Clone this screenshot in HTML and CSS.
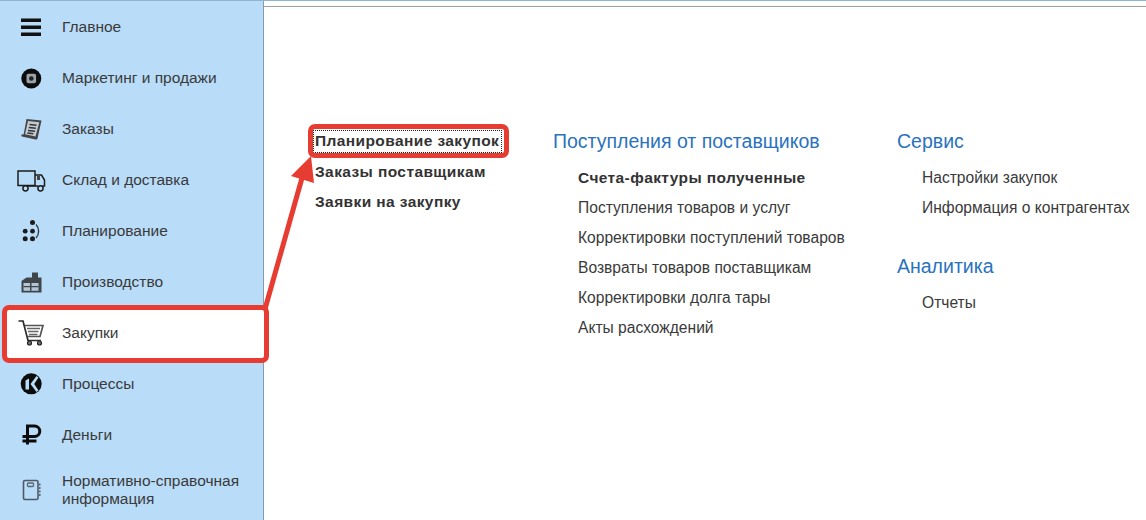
FILE: index.html
```html
<!DOCTYPE html>
<html lang="ru">
<head>
<meta charset="utf-8">
<title>Закупки</title>
<link rel="stylesheet" href="styles.css">
</head>
<body>
<div class="app">
  <nav class="sidebar">
    <div class="nav-item"><span class="nav-icon"><svg width="30" height="30" viewBox="0 0 30 30"><path d="M5 6.500h20v3.500H5zM5 13.500h20v3.500H5zM5 20.500h20v3.500H5z" fill="#111"/></svg></span><span class="nav-label">Главное</span></div>
    <div class="nav-item"><span class="nav-icon"><svg width="30" height="30" viewBox="0 0 30 30"><circle cx="15.300" cy="15.500" r="10" fill="#0c0c0c"/><rect x="10.500" y="10.700" width="9.600" height="9.600" rx="1.800" fill="#9aa2aa"/><circle cx="15.300" cy="15.500" r="2.300" fill="#222"/></svg></span><span class="nav-label">Маркетинг и продажи</span></div>
    <div class="nav-item"><span class="nav-icon"><svg width="30" height="30" viewBox="0 0 30 30"><path d="M10.500 5l15 1.500-4 18c-.3 1-1 1.200-2 1L6 22.500c-.8-.3-.8-1-.3-2l2-.2z" fill="#444"/><path d="M12 7l11.300 1.200L19.500 22.500 9 20.200z" fill="#c3cbd2"/><path d="M13.500 10.500l7 .8M12.800 13.500l7 .8M12 16.500l7 .8M11.300 19l6 .8" stroke="#333" stroke-width="1.400"/></svg></span><span class="nav-label">Заказы</span></div>
    <div class="nav-item"><span class="nav-icon"><svg width="30" height="30" viewBox="0 0 30 30"><path d="M2 6h17v14.500H2z" fill="none" stroke="#1c1c1c" stroke-width="1.500"/><path d="M19 10h6.500l3 5v6h-2" fill="none" stroke="#1c1c1c" stroke-width="1.500"/><path d="M7 21h15" stroke="#1c1c1c" stroke-width="1.500"/><path d="M21 11h3v4h-3z" fill="#444"/><circle cx="9.500" cy="23.300" r="2.600" fill="#b9dcf9" stroke="#1c1c1c" stroke-width="1.500"/><circle cx="24.500" cy="23.300" r="2.600" fill="#b9dcf9" stroke="#1c1c1c" stroke-width="1.500"/></svg></span><span class="nav-label">Склад и доставка</span></div>
    <div class="nav-item"><span class="nav-icon"><svg width="30" height="30" viewBox="0 0 30 30"><g fill="#1c1c1c"><circle cx="16.500" cy="6.500" r="2.500"/><circle cx="9.200" cy="15.200" r="2.400"/><circle cx="16.500" cy="15.200" r="2.400"/><circle cx="9.200" cy="22.800" r="2.500"/><circle cx="16.500" cy="22.800" r="2.500"/></g><path d="M20 8.500c3.500 3.500 3.500 10 0 13.500" fill="none" stroke="#333" stroke-width="1.300"/></svg></span><span class="nav-label">Планирование</span></div>
    <div class="nav-item"><span class="nav-icon"><svg width="30" height="30" viewBox="0 0 30 30"><path d="M5.500 25.500V14l5-3.500h5.500V5.500h6v5h3.500v15z" fill="#3f4549"/><path d="M7.500 16h15v7.800h-15z" fill="#b3c6d6"/><path d="M14 16h1.500v7.800H14zM7.500 19h15v1.200h-15z" fill="#3f4549"/></svg></span><span class="nav-label">Производство</span></div>
    <div class="nav-item nav-item-active"><span class="nav-icon"><svg width="30" height="30" viewBox="0 0 30 30"><path d="M2.500 3h4.500l5 19.500h13" fill="none" stroke="#2a2a2a" stroke-width="1.700"/><path d="M9 7.500h18l-3 11H12" fill="none" stroke="#555" stroke-width="1.700"/><path d="M11 10.500h13M12 13.500h10.500M13 16.500h8.500" stroke="#666" stroke-width="1.400"/><circle cx="13.500" cy="25" r="2" fill="#777" stroke="#222" stroke-width="1.200"/><circle cx="23.500" cy="25" r="2" fill="#777" stroke="#222" stroke-width="1.200"/></svg></span><span class="nav-label">Закупки</span></div>
    <div class="nav-item"><span class="nav-icon"><svg width="30" height="30" viewBox="0 0 30 30"><circle cx="15.200" cy="14.800" r="10.500" fill="#0c0c0c"/><path d="M9.500 11.500l3.500-2v11h-3.500zM14.500 15l6-8 2 1.500-4.300 6.500 4.300 6.500-2 1.500z" fill="#b9dcf9"/></svg></span><span class="nav-label">Процессы</span></div>
    <div class="nav-item"><span class="nav-icon"><svg width="30" height="30" viewBox="0 0 30 30"><path d="M11.500 24.500V6h7a5.200 5.200 0 0 1 0 10.500H6.500M6.500 21h14" fill="none" stroke="#0c0c0c" stroke-width="3"/></svg></span><span class="nav-label">Деньги</span></div>
    <div class="nav-item nav-item-wide"><span class="nav-icon"><svg width="30" height="30" viewBox="0 0 30 30"><rect x="7.500" y="5.500" width="14.500" height="19" rx="1.500" fill="#b9dcf9" stroke="#4f5a64" stroke-width="1.600"/><rect x="11.500" y="8" width="6" height="3.500" rx="1" fill="none" stroke="#5a6570" stroke-width="1.300"/><path d="M23.800 8.500v2M23.800 12v2M23.800 15.500v2M23.800 19v2" stroke="#5a6570" stroke-width="1.500"/></svg></span><span class="nav-label">Нормативно-справочная информация</span></div>
  </nav>
  <main class="content">
    <div class="columns">
      <section class="col col-first">
        <a class="link link-strong link-focus">Планирование закупок</a>
        <a class="link link-strong">Заказы поставщикам</a>
        <a class="link link-strong">Заявки на закупку</a>
      </section>
      <section class="col col-second">
        <h2 class="group-title">Поступления от поставщиков</h2>
        <div class="group-links">
          <a class="link link-strong">Счета-фактуры полученные</a>
          <a class="link">Поступления товаров и услуг</a>
          <a class="link">Корректировки поступлений товаров</a>
          <a class="link">Возвраты товаров поставщикам</a>
          <a class="link">Корректировки долга тары</a>
          <a class="link">Акты расхождений</a>
        </div>
      </section>
      <section class="col col-third">
        <h2 class="group-title">Сервис</h2>
        <div class="group-links">
          <a class="link">Настройки закупок</a>
          <a class="link">Информация о контрагентах</a>
        </div>
        <h2 class="group-title group-title-next">Аналитика</h2>
        <div class="group-links">
          <a class="link">Отчеты</a>
        </div>
      </section>
    </div>
  </main>
</div>
<div class="mark-link"></div>
<svg class="arrow" width="1146" height="520" viewBox="0 0 1146 520"><path d="M265 309L302 178" stroke="#e63c32" stroke-width="5" fill="none"/><path d="M311 156L291 176L314 183z" fill="#e63c32"/></svg>
</body>
</html>
```
FILE: styles.css
```css
*, *::before { box-sizing: border-box; }
html, body { margin: 0; height: 520px; overflow: hidden; background: #fff; }
body { position: relative; font-family: "Liberation Sans", Arial, sans-serif; color: #333; }
.app { display: flex; height: 520px; border-top: 1px solid #8fb3d3; }
.sidebar { width: 264px; flex: none; background: #b9dcf9; border-right: 1px solid #8a9aa8; display: flex; flex-direction: column; }
.nav-item { height: 51px; flex: none; display: flex; align-items: center; }
.nav-item-wide { height: 57px; padding-top: 3px; }
.nav-item-active { position: relative; }
.nav-item-active::before { content: ""; position: absolute; left: 2px; top: -2px; width: 267px; height: 58px; background: #fff; border: 5px solid #e63c32; border-radius: 7px; }
.nav-item-active > span { position: relative; }
.nav-icon { width: 62px; flex: none; display: flex; justify-content: center; padding-right: 1px; }
.nav-label { font-size: 15.5px; line-height: 18px; color: #3a3a3a; width: 196px; }
.content { flex: 1; }
.content::before { content: ""; display: block; height: 1px; margin-top: 5px; background: #a0a0a0; }
.columns { display: flex; padding-top: 120px; }
.col { display: flex; flex-direction: column; }
.col-first { width: 238px; margin-left: 51px; }
.col-second { width: 344px; }
.link { display: block; height: 30px; line-height: 30px; font-size: 15.6px; color: #3a3a3a; white-space: nowrap; }
.link-strong { font-weight: bold; font-size: 15.5px; letter-spacing: 0.4px; color: #333; }
.link-focus { width: 189px; height: 23px; line-height: 21px; margin: 3px 0 4px -2px; padding-left: 2px; outline: 1px dotted #222; outline-offset: -1px; }
.group-title { margin: 0; font-size: 19.5px; font-weight: normal; line-height: 28px; color: #2a72bd; }
.group-title-next { margin-top: 29px; }
.group-links { padding-left: 25px; padding-top: 8px; }
.mark-link { position: absolute; left: 308px; top: 124px; width: 201px; height: 34px; border: 5px solid #e63c32; border-radius: 7px; }
.arrow { position: absolute; left: 0; top: 0; pointer-events: none; }
```
